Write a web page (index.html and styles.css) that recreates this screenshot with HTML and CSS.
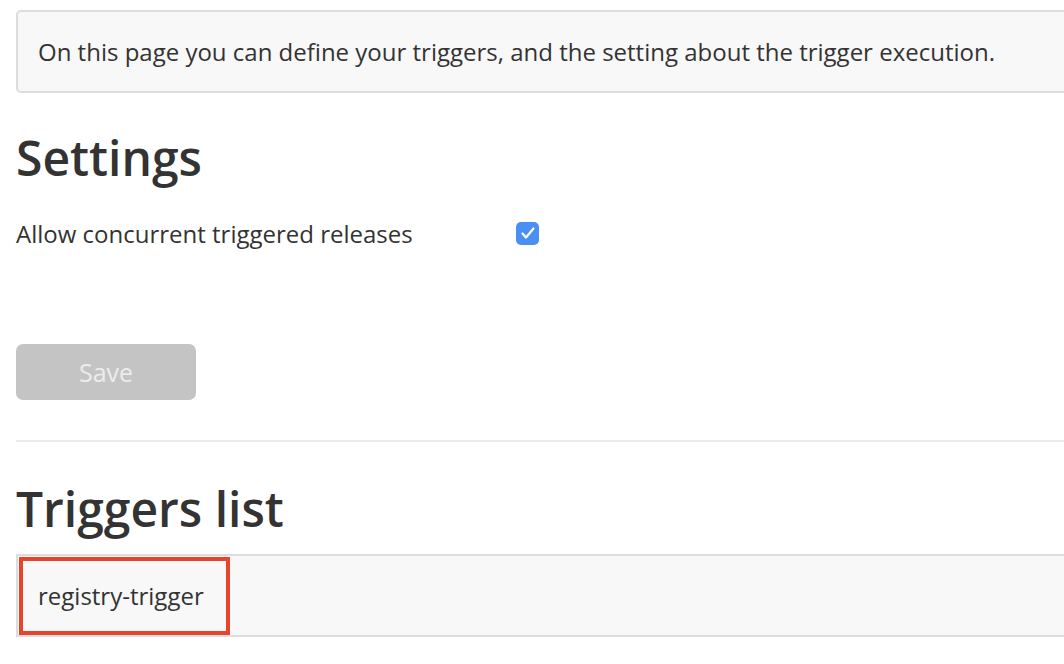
FILE: index.html
```html
<!DOCTYPE html>
<html>
<head>
<meta charset="utf-8">
<link rel="stylesheet" href="styles.css">
</head>
<body>
<div class="page">
  <div class="info">On this page you can define your triggers, and the setting about the trigger execution.</div>
  <h2 class="title title-settings">Settings</h2>
  <div class="setting-row">
    <span class="setting-label">Allow concurrent triggered releases</span>
    <span class="checkbox">
      <svg width="16" height="14" viewBox="0 0 16 14"><path d="M2.5 7.5 L6 11.5 L13.5 2.5" fill="none" stroke="#fff" stroke-width="2.2" stroke-linecap="round" stroke-linejoin="round"/></svg>
    </span>
  </div>
  <button class="save" disabled>Save</button>
  <hr class="divider">
  <h2 class="title title-triggers">Triggers list</h2>
  <div class="trigger-list">
    <div class="trigger-item">registry-trigger</div>
  </div>
</div>
</body>
</html>
```

FILE: styles.css
```css
html, body {
  margin: 0;
  padding: 0;
  background: #fff;
  overflow: hidden;
}
body {
  font-family: "Open Sans", "Liberation Sans", sans-serif;
  color: #333;
}
.page {
  padding: 10px 0 0 16px;
  width: 1100px;
}
.info {
  background: #f8f8f8;
  border: 2px solid #ddd;
  border-radius: 5px;
  height: 79px;
  box-sizing: content-box;
  display: flex;
  align-items: center;
  padding: 0 20px;
  font-size: 24px;
}
.title {
  margin: 0;
  font-weight: 600;
  font-size: 48px;
  line-height: 1;
  color: #333;
}
.title-settings {
  margin-top: 41px;
}
.setting-row {
  display: flex;
  align-items: center;
  margin-top: 36px;
  height: 30px;
}
.setting-label {
  font-size: 24px;
  width: 500px;
}
.checkbox {
  width: 23px;
  height: 23px;
  background: #4b8ff3;
  border-radius: 5px;
  display: flex;
  align-items: center;
  justify-content: center;
}
.save {
  display: block;
  margin-top: 96px;
  width: 180px;
  height: 56px;
  border: 0;
  border-radius: 7px;
  background: #c4c4c4;
  color: #ececec;
  font-family: "Open Sans", "Liberation Sans", sans-serif;
  font-size: 25px;
}
.divider {
  margin: 40px 0 0 0;
  border: 0;
  border-top: 2px solid #eaeaea;
}
.title-triggers {
  margin-top: 43px;
}
.trigger-list {
  margin-top: 21px;
  background: #f8f8f8;
  border-top: 2px solid #ddd;
  border-bottom: 2px solid #ddd;
  border-left: 2px solid #ddd;
  height: 79px;
  padding: 0 0 0 1px;
  display: flex;
  align-items: center;
}
.trigger-item {
  border: 4px solid #e8432b;
  height: 78px;
  box-sizing: border-box;
  width: 211px;
  display: flex;
  align-items: center;
  padding-left: 15px;
  font-size: 24px;
}
```
